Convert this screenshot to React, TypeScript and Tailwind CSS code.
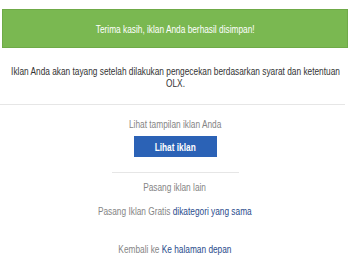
import React from 'react';

const font = { fontFamily: "'Liberation Sans', Arial, sans-serif" };

// the page uses a condensed face; squeeze Liberation Sans to match
const Narrow = ({ children, className = '' }: { children: React.ReactNode; className?: string }) => (
  <span className={`inline-block whitespace-nowrap scale-x-[0.755] ${className}`}>{children}</span>
);

export default function App() {
  return (
    <div className="w-[350px] h-[272px] bg-white overflow-hidden text-[11px] leading-[12px]" style={font}>
      {/* Success banner */}
      <div className="mx-[2px] mt-[9px] h-[39px] flex items-center justify-center bg-[#7ab851] border border-[#6faa48] text-white">
        <Narrow>Terima kasih, iklan Anda berhasil disimpan!</Narrow>
      </div>

      <div className="mt-[17px] flex justify-center">
        <p className="w-[445px] shrink-0 text-center text-[#333] scale-x-[0.755]">
          Iklan Anda akan tayang setelah dilakukan pengecekan berdasarkan syarat dan ketentuan OLX.
        </p>
      </div>

      <div className="mt-[15px] mr-[5px] h-px bg-[#e6e6e6]" />

      <div className="flex flex-col items-center">
        <div className="mt-[13px] text-[#858585]">
          <Narrow>Lihat tampilan iklan Anda</Narrow>
        </div>
        <button className="mt-[6px] w-[83px] h-[21px] bg-[#2b62b6] text-white font-bold">
          <Narrow>Lihat iklan</Narrow>
        </button>
        <div className="mt-[15px] w-[127px] h-px bg-[#e6e6e6]" />
        <div className="mt-[8px] text-[#858585]">
          <Narrow>Pasang iklan lain</Narrow>
        </div>
        <div className="mt-[12px] text-[#858585]">
          <Narrow>
            Pasang Iklan Gratis <a className="text-[#2a4c8c]">dikategori yang sama</a>
          </Narrow>
        </div>
        <div className="mt-[26px] text-[#858585]">
          <Narrow>
            Kembali ke <a className="text-[#2a4c8c]">Ke halaman depan</a>
          </Narrow>
        </div>
      </div>
    </div>
  );
}
